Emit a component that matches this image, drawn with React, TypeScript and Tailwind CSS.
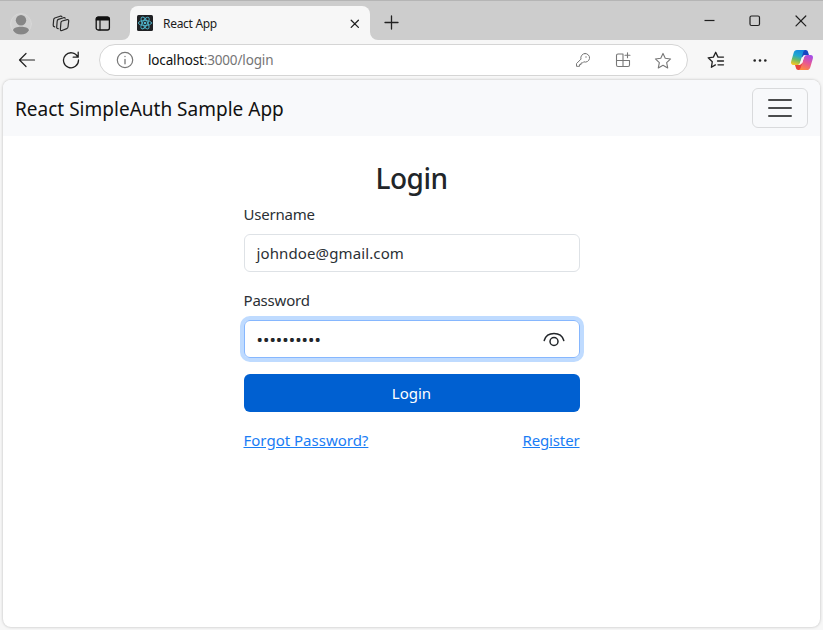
import type { ReactNode } from "react";

type IconProps = { w: number; h: number; children: ReactNode; className?: string };

function Icon({ w, h, children, className = "" }: IconProps) {
  return (
    <svg
      width={w}
      height={h}
      viewBox={`0 0 ${w} ${h}`}
      fill="none"
      stroke="currentColor"
      strokeWidth="1.2"
      strokeLinecap="round"
      strokeLinejoin="round"
      className={`block shrink-0 ${className}`}
    >
      {children}
    </svg>
  );
}

function Avatar() {
  return (
    <Icon w={22} h={24} className="ml-[10px]">
      <circle cx="11" cy="12" r="10.4" fill="#d0d0d0" stroke="#d8d8d8" strokeWidth="1" />
      <circle cx="11" cy="8.3" r="5.2" fill="#868686" stroke="none" />
      <path d="M3 18.2C3.8 15.8 7 14.8 11 14.8s7.2 1 8 3.4C17.6 20.9 14.6 22.5 11 22.5S4.4 20.9 3 18.2Z" fill="#868686" stroke="none" />
    </Icon>
  );
}

function Workspaces() {
  return (
    <Icon w={18} h={18} className="ml-[20px] text-[#2a2a2a]">
      <path d="M10.200 6 15.200 4.700Q16.900 4.400 16.700 6L16 12Q15.800 13.200 14.700 13.600L10 15.500Q8.200 16 8.400 14.300L8.900 7.700Q9 6.400 10.200 6Z" />
      <path d="M6.200 13.700Q4.500 13.500 4.700 11.900L5.200 6Q5.300 4.800 6.400 4.400L11.600 2.700Q12.900 2.400 13.200 3.200" />
      <path d="M2.700 11.900Q1 11.600 1.200 10L1.700 4.500Q1.800 3.400 2.800 3L8.100 1.200Q9.500.9 9.900 1.600" />
    </Icon>
  );
}

function TabActions() {
  return (
    <Icon w={16} h={16} className="ml-[25px] text-[#111]">
      <rect x="1.2" y="1.2" width="13.2" height="12.8" rx="2" strokeWidth="1.3" />
      <path d="M.8 4.500V3Q.8.500 3.300.5H12.300Q14.800.5 14.800 3V4.500Z" fill="currentColor" stroke="none" />
      <path d="M5 4.500v9.300" />
    </Icon>
  );
}

function ReactLogo() {
  return (
    <Icon w={16} h={16} className="ml-[7px] text-[#4fb5cc]">
      <rect width="16" height="16" rx="1.5" fill="#202124" stroke="none" />
      <g strokeWidth="0.9">
        <ellipse cx="8" cy="8" rx="6.6" ry="2.6" />
        <ellipse cx="8" cy="8" rx="6.6" ry="2.6" transform="rotate(60 8 8)" />
        <ellipse cx="8" cy="8" rx="6.6" ry="2.6" transform="rotate(120 8 8)" />
      </g>
      <circle cx="8" cy="8" r="1.3" fill="currentColor" stroke="none" />
    </Icon>
  );
}

function Flare({ side }: { side: "left" | "right" }) {
  return (
    <svg
      width="8"
      height="8"
      viewBox="0 0 8 8"
      className={side === "left" ? "absolute bottom-0 -left-2" : "absolute bottom-0 -right-2"}
    >
      <path d={side === "left" ? "M8 0v8H0A8 8 0 0 0 8 0Z" : "M0 0v8h8A8 8 0 0 1 0 0Z"} fill="#f7f7f7" />
    </svg>
  );
}

function TabStrip() {
  return (
    <header className="flex h-10 border-t border-[#b5b5b5] bg-[#cdcdcd]">
      <div className="flex w-[130px] items-center pt-[6px]">
        <Avatar />
        <Workspaces />
        <TabActions />
      </div>
      <div className="relative mt-[5px] flex w-60 items-center rounded-t-lg bg-[#f7f7f7]">
        <Flare side="left" />
        <ReactLogo />
        <span className="ml-[10px] flex-1 pt-px text-[12px] tracking-[-0.3px] text-[#1b1b1b]">React App</span>
        <Icon w={10} h={10} className="mt-px mr-[10px] text-[#222]">
          <path d="m1.2 1.2 7.2 7.2m0-7.2-7.2 7.2" strokeWidth="1.3" />
        </Icon>
        <Flare side="right" />
      </div>
      <Icon w={16} h={16} className="mt-[14px] ml-[14px] text-[#222]">
        <path d="M7.5 1v13M1 7.5h13" strokeWidth="1.3" />
      </Icon>
      <div className="ml-auto flex h-[39px] items-center gap-[34px] pr-[16px] text-[#1f1f1f]">
        <Icon w={11} h={12}>
          <path d="M.5 5.500h10" strokeLinecap="butt" />
        </Icon>
        <Icon w={12} h={12}>
          <rect x="1" y="1" width="9.5" height="9.5" rx="1.5" />
        </Icon>
        <Icon w={12} h={12}>
          <path d="m1 1 9.800 9.800m0-9.800L1 10.800" />
        </Icon>
      </div>
    </header>
  );
}

function Copilot() {
  return (
    <svg width="24" height="22" viewBox="0 0 24 22" className="ml-[22px] block shrink-0">
      <defs>
        <linearGradient id="cool" x1="0.65" y1="0" x2="0.35" y2="1">
          <stop offset="0" stopColor="#1686df" />
          <stop offset="0.4" stopColor="#20a8cf" />
          <stop offset="0.68" stopColor="#6dbb65" />
          <stop offset="1" stopColor="#f2c528" />
        </linearGradient>
        <linearGradient id="warm" x1="0.7" y1="0" x2="0.3" y2="1">
          <stop offset="0" stopColor="#a54ee8" />
          <stop offset="0.5" stopColor="#e75794" />
          <stop offset="1" stopColor="#ff8a3e" />
        </linearGradient>
      </defs>
      <path d="M10 1h5.600c1.500 0 2.100.8 2.500 2.200L19 6h-3.800c-1.500 0-2.200.7-2.700 2.200H9Z" fill="#1647c2" />
      <path d="M14 21H8.400c-1.500 0-2.100-.8-2.500-2.200L5 16h3.800c1.500 0 2.200-.7 2.700-2.200H15Z" fill="#e8433d" />
      <path d="M7 1h8.300c-1.400.4-1.900 1.600-2.300 3l-2.900 9.400C9.500 15.200 8.400 16 6.700 16H3.500C1.300 16 .6 14.300 1.200 12.300L3.700 3.800C4.300 1.900 5.200 1 7 1Z" fill="url(#cool)" />
      <path d="M17 21H8.700c1.400-.4 1.900-1.600 2.300-3l2.900-9.400C14.500 6.800 15.600 6 17.300 6h3.200c2.200 0 2.900 1.700 2.300 3.700l-2.500 8.500C19.700 20.100 18.800 21 17 21Z" fill="url(#warm)" />
      <path d="M12.500 8.200Q13 6.700 14.500 6.600L15.200 6.500Q14.300 7.300 13.900 8.600L12.400 13.600Q11.900 15.200 9.800 15.400L9.200 15.500Q9.900 14.800 10.300 13.400Z" fill="#f7f7f7" />
    </svg>
  );
}

const STAR = "m9 1.4 2.25 4.9 5.35.65-3.95 3.65 1.05 5.3L9 13.3l-4.7 2.6 1.05-5.3L1.4 6.95l5.35-.65Z";

function Toolbar() {
  return (
    <div className="flex h-10 items-center text-[#222]">
      <Icon w={18} h={16} className="ml-[18px]">
        <path d="M16.5 8H1.5m6.500-6.500L1.500 8 8 14.500" />
      </Icon>
      <Icon w={18} h={18} className="ml-[26px]">
        <path d="M15.800 6.100A7.500 7.500 0 1 0 16.500 9M16.200 1.200v5h-5" strokeWidth="1.3" />
      </Icon>
      <div className="ml-[19px] flex h-8 w-[589px] items-center rounded-full border border-[#d5d5d5] bg-white text-[#777]">
        <Icon w={18} h={18} className="ml-[16px]">
          <circle cx="9" cy="9" r="7.7" />
          <path d="M9 8.300v4.500M9 5.400v.1" strokeWidth="1.3" />
        </Icon>
        <span className="ml-[14px] flex-1 pt-px text-[13.5px] tracking-[-0.15px] text-[#757575]">
          <span className="text-[#111]">localhost</span>:3000/login
        </span>
        <Icon w={16} h={16} className="mr-[24px]">
          <path d="M10 1.500a4.300 4.300 0 1 1-1.300 8.300L7.500 11H6v1.600H4.500v1.700H1.500V11.600L6 7.100A4.300 4.300 0 0 1 10 1.500Z" strokeWidth="1" />
          <circle cx="11" cy="5" r=".7" fill="currentColor" stroke="none" />
        </Icon>
        <Icon w={16} h={16} className="mr-[23px]">
          <path d="M8 2H3Q1.500 2 1.500 3.500v9.500Q1.500 14.500 3 14.500h10q1.500 0 1.500-1.500V8.500H1.500M8 2v12.500M12.500.8v5M10 3.300h5" strokeWidth="1.1" />
        </Icon>
        <Icon w={18} h={18} className="mt-px mr-[15px]">
          <path d={STAR} strokeWidth="1.1" />
        </Icon>
      </div>
      <Icon w={18} h={18} className="ml-[19px]">
        <path d="M5.300 10.700 1.200 6.800l5.200-.7L8.700 1.300 11 6.100h5.500M10.500 10h6M11 13.800h5.500M5.300 10.700l-.9 5.600 4-2.400" strokeWidth="1.3" />
      </Icon>
      <Icon w={16} h={4} className="ml-[27px]">
        <g fill="currentColor" stroke="none">
          <circle cx="2.7" cy="2.5" r="1.3" />
          <circle cx="8" cy="2.5" r="1.3" />
          <circle cx="13.3" cy="2.5" r="1.3" />
        </g>
      </Icon>
      <Copilot />
    </div>
  );
}

function Navbar() {
  return (
    <nav className="flex h-14 items-center justify-between bg-[#f8f9fb] px-3">
      <span className="pt-[2px] text-[19px] tracking-[0.01px] text-[#111]">React SimpleAuth Sample App</span>
      <button className="flex h-10 w-14 items-center justify-center rounded-md border border-[#d9dadc] text-[#4b4c4d]">
        <Icon w={24} h={20}>
          <path d="M1 2h22M1 10h22M1 18h22" strokeWidth="2" />
        </Icon>
      </button>
    </nav>
  );
}

function LoginForm() {
  return (
    <main className="mx-auto flex w-[336px] flex-col pt-[23px] text-[15px] text-[#2b3035]">
      <h2 className="text-center text-[28px] leading-[38px] font-medium tracking-[-0.5px] text-[#212529]">Login</h2>
      <label className="mt-[5px] leading-6 tracking-[-0.2px]">Username</label>
      <div className="mt-[8px] flex h-[38px] items-center rounded-md border border-[#dee2e6] px-3 tracking-[0.12px]">
        johndoe@gmail.com
      </div>
      <label className="mt-[16px] leading-6 tracking-[-0.2px]">Password</label>
      <div className="mt-[8px] flex h-[38px] items-center justify-between rounded-md border border-[#86b7fe] pr-[14px] pl-3 text-[#212529] ring-4 ring-[#bfdbff]">
        <span className="pt-[2px] text-[17px] tracking-[0.05px]">••••••••••</span>
        <Icon w={22} h={16} className="mt-[2px]">
          <path d="M1.200 8.500C2.600 4.100 6.500 1.600 11 1.600s8.400 2.500 9.800 6.900" strokeWidth="1.5" />
          <circle cx="11" cy="9.5" r="4" strokeWidth="1.5" />
        </Icon>
      </div>
      <button className="mt-[16px] h-[38px] rounded-md bg-[#0060d1] text-white">Login</button>
      <div className="mt-[16px] flex justify-between leading-6 text-[#1a7df5]">
        <a className="underline">Forgot Password?</a>
        <a className="tracking-[-0.15px] underline">Register</a>
      </div>
    </main>
  );
}

export default function App() {
  return (
    <div className="flex h-[630px] w-[823px] flex-col overflow-hidden bg-[#f7f7f7] font-['Noto_Sans','Open_Sans',sans-serif]">
      <TabStrip />
      <Toolbar />
      <section className="mx-[3px] h-[547px] overflow-hidden rounded-lg bg-white shadow-[0_0_3px_rgba(0,0,0,0.25)]">
        <Navbar />
        <LoginForm />
      </section>
    </div>
  );
}
